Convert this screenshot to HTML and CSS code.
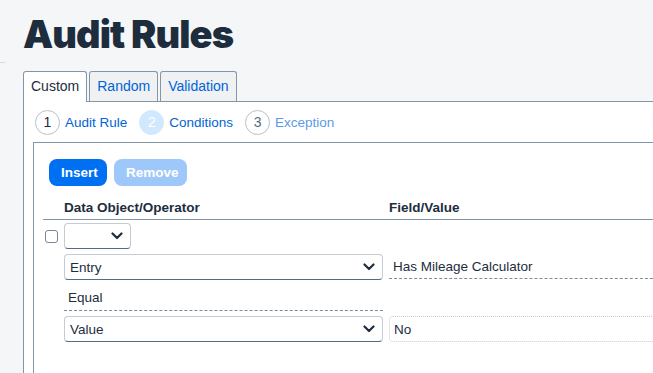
FILE: index.html
```html
<!DOCTYPE html>
<html lang="en">
<head>
    <meta charset="UTF-8">
    <title>Audit Rules</title>
    <link rel="stylesheet" href="styles.css">
</head>
<body>
    <div class="edge"></div>
    <h1 class="title">Audit Rules</h1>

    <div class="tabs">
        <div class="tab active">Custom</div>
        <div class="tab">Random</div>
        <div class="tab">Validation</div>
    </div>

    <div class="panel">
        <div class="steps">
            <div class="step"><span class="num">1</span><span class="label">Audit Rule</span></div>
            <div class="step current"><span class="num">2</span><span class="label">Conditions</span></div>
            <div class="step next"><span class="num">3</span><span class="label">Exception</span></div>
        </div>

        <div class="inner">
            <div class="toolbar">
                <button class="btn primary">Insert</button>
                <button class="btn disabled">Remove</button>
            </div>

            <div class="grid">
                <div class="head"></div>
                <div class="head">Data Object/Operator</div>
                <div class="head value-col">Field/Value</div>

                <div class="cell"><span class="check"></span></div>
                <div class="cell">
                    <div class="select small"><span class="text"></span><svg class="chev" viewBox="0 0 12 8"><path d="M1.5 1.5 L6 6 L10.5 1.5" /></svg></div>
                </div>
                <div class="cell value-col"></div>

                <div class="cell"></div>
                <div class="cell">
                    <div class="select"><span class="text">Entry</span><svg class="chev" viewBox="0 0 12 8"><path d="M1.5 1.5 L6 6 L10.5 1.5" /></svg></div>
                </div>
                <div class="cell value-col">
                    <div class="field">Has Mileage Calculator</div>
                </div>

                <div class="cell"></div>
                <div class="cell">
                    <div class="field operator">Equal</div>
                </div>
                <div class="cell value-col"></div>

                <div class="cell"></div>
                <div class="cell">
                    <div class="select"><span class="text">Value</span><svg class="chev" viewBox="0 0 12 8"><path d="M1.5 1.5 L6 6 L10.5 1.5" /></svg></div>
                </div>
                <div class="cell value-col">
                    <div class="input">No</div>
                </div>
            </div>
        </div>
    </div>
</body>
</html>
```

FILE: styles.css
```css
html, body {
    height: 100%;
}

body {
    margin: 0;
    padding-left: 23px;
    background-color: #f5f6f7;
    font-family: "Liberation Sans", Arial, sans-serif;
    font-size: 13.5px;
    color: #1d2d3e;
    display: flex;
    flex-direction: column;
    overflow: hidden;
    position: relative;
}

/* small grey rule peeking in from the left edge */
.edge {
    position: absolute;
    left: 0;
    top: 62px;
    width: 5px;
    border-top: 1px solid #d5dadd;
}

.title {
    margin: 11px 0 0 0;
    font-family: Inter, sans-serif;
    font-weight: 900;
    font-size: 38px;
    line-height: 46px;
    letter-spacing: -0.9px;
    color: #1d2d3e;
}

.tabs {
    display: flex;
    gap: 2px;
    margin-top: 14px;
    position: relative;
    z-index: 1;
}

.tab {
    height: 29px;
    line-height: 29px;
    padding: 0 7px;
    border: 1px solid #8396a8;
    border-bottom: none;
    border-radius: 3px 3px 0 0;
    background-color: #eff1f3;
    color: #0064d9;
    font-size: 14px;
}

.tab.active {
    background-color: #fff;
    color: #1d2d3e;
    height: 30px;
    margin-bottom: -1px;
}

.panel {
    flex: 1;
    margin-right: -30px;
    background-color: #fff;
    border-top: 1px solid #8396a8;
    border-left: 1px solid #8396a8;
    display: flex;
    flex-direction: column;
}

.steps {
    display: flex;
    align-items: center;
    gap: 12px;
    height: 40px;
    padding-left: 11px;
}

.step {
    display: flex;
    align-items: center;
    gap: 5px;
    color: #0064d9;
}

.num {
    width: 23px;
    height: 23px;
    border: 1px solid #b8c1ca;
    border-radius: 50%;
    display: flex;
    align-items: center;
    justify-content: center;
    color: #1d2d3e;
    font-size: 14px;
}

.step.current .num {
    background-color: #d1e8ff;
    border-color: #d1e8ff;
    color: #fff;
}

.step.next .num {
    color: #556b82;
}

.step.next .label {
    color: #5b9ae8;
}

.inner {
    flex: 1;
    margin-left: 9px;
    border-top: 1px solid #8396a8;
    border-left: 1px solid #8396a8;
    padding: 16px 0 0 9px;
}

.toolbar {
    display: flex;
    gap: 7px;
    padding-left: 6px;
}

.btn {
    height: 27px;
    border: none;
    border-radius: 8px;
    font-family: "Liberation Sans", Arial, sans-serif;
    font-weight: bold;
    font-size: 13.5px;
    color: #fff;
    padding: 0 12px;
}

.btn.primary {
    background-color: #0070f2;
    width: 58px;
}

.btn.disabled {
    background-color: #9ec8fa;
    width: 73px;
}

.grid {
    display: grid;
    grid-template-columns: 21px 319px 1fr;
    margin-top: 13px;
}

.head {
    font-weight: bold;
    height: 20px;
    line-height: 17px;
    border-bottom: 1px solid #8396a8;
}

.value-col {
    padding-left: 6px;
}

.cell {
    height: 26px;
    margin-top: 5px;
    display: flex;
    align-items: center;
}

.grid .cell:nth-child(-n+6) {
    margin-top: 3px;
}

.check {
    width: 11px;
    height: 11px;
    border: 1px solid #788797;
    border-radius: 3px;
    margin-left: 2px;
}

.select {
    width: 100%;
    height: 26px;
    box-sizing: border-box;
    border: 1px solid #c4cbd2;
    border-bottom-color: #556b82;
    border-radius: 4px;
    display: flex;
    align-items: center;
    padding: 0 7px 0 5px;
}

.select.small {
    width: 67px;
}

.select .text {
    flex: 1;
}

.chev {
    width: 12px;
    height: 8px;
    fill: none;
    stroke: #1d2d3e;
    stroke-width: 2.2;
    stroke-linecap: round;
    stroke-linejoin: round;
}

.field {
    width: 100%;
    height: 25px;
    box-sizing: border-box;
    border-bottom: 1px dashed #7d8b99;
    display: flex;
    align-items: center;
    padding-left: 4px;
    align-self: flex-start;
}

.field.operator {
    height: 26px;
    padding-left: 4px;
}

.input {
    width: 100%;
    height: 26px;
    box-sizing: border-box;
    border: 1px dotted #c4cbd2;
    border-radius: 4px;
    display: flex;
    align-items: center;
    padding-left: 4px;
}
```
